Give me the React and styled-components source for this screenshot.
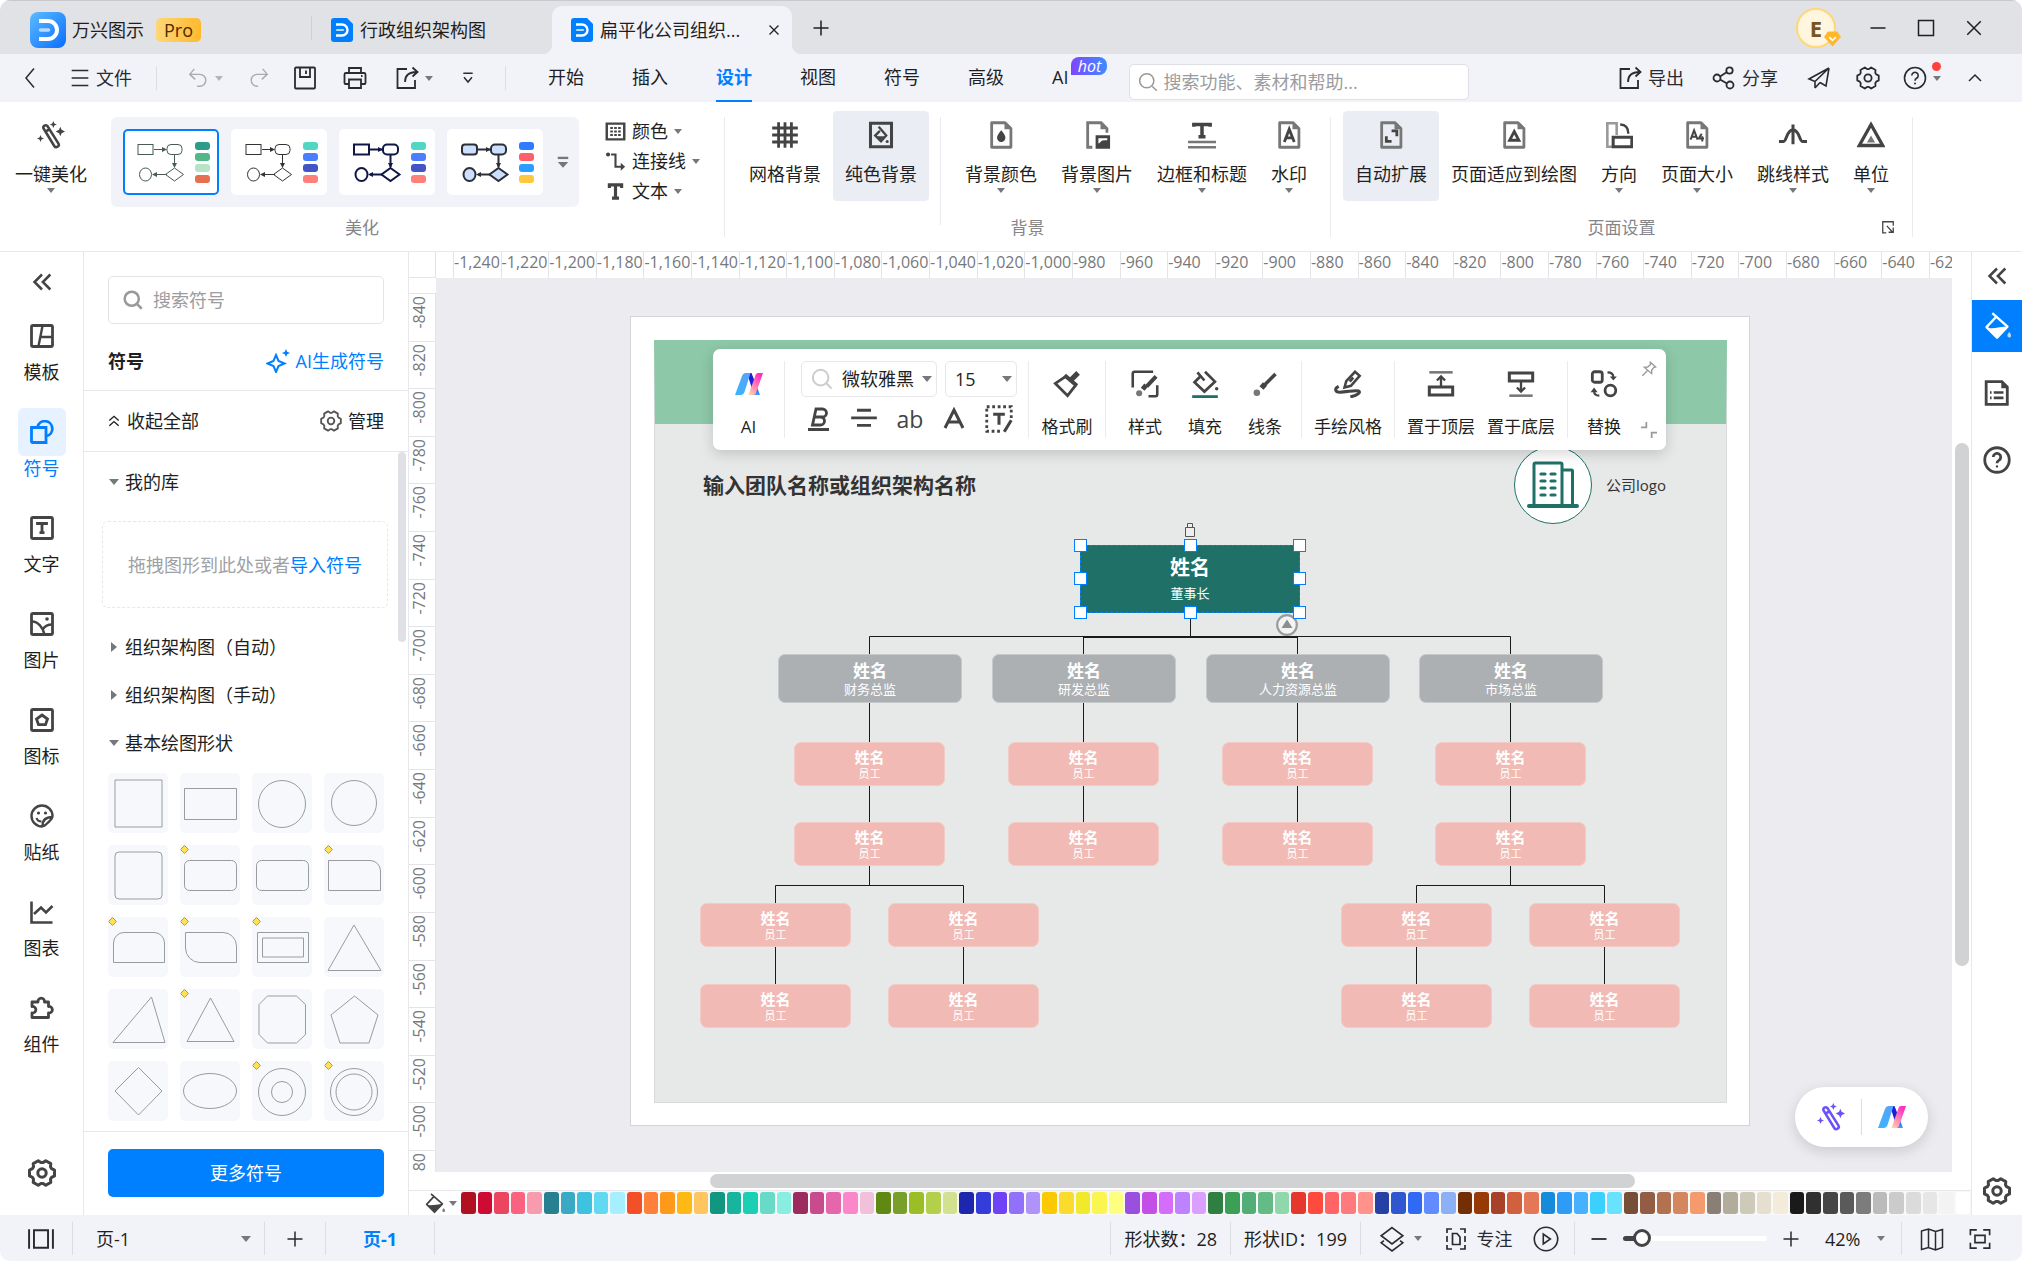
import React from "react";
import styled, { createGlobalStyle, css } from "styled-components";

const FONT = `"Open Sans", "Noto Sans CJK SC", sans-serif`;

/* ---------- icons ---------- */

const gearPath = (c, outer, inner) => {
    const pts = [];
    for (let i = 0; i < 6; i++) {
        [[-13, outer], [13, outer], [24, inner], [36, inner]].forEach(([deg, r]) => {
            const a = ((i * 60 + deg) * Math.PI) / 180;
            pts.push(`${(c + r * Math.cos(a)).toFixed(2)} ${(c + r * Math.sin(a)).toFixed(2)}`);
        });
    }
    return `M${pts.join("L")}Z`;
};

const pageOutline = (
    <path d="M4 1.5h11.5l5 5v16H4z" stroke="#777" strokeWidth="2.4" strokeLinejoin="round" />
);
const pageFold = <path d="M15 1v6h6z" fill="#777" stroke="none" />;

const ICONS = {
    back: <path d="M16 2.500L8 12l8 9.500" />,
    menu: <path d="M2 3h20M2 12h20M2 21h20" />,
    undo: <path d="M8 2L3 8l6 5.500M3.500 8H14a6.500 6.500 0 0 1 0 13h-3" />,
    redo: <path d="M16 2l5 6-6 5.500M20.500 8H10a6.500 6.500 0 0 0 0 13h1" />,
    save: <path d="M3 1.500h18a1 1 0 0 1 1 1v19a1 1 0 0 1-1 1H3a1 1 0 0 1-1-1v-19a1 1 0 0 1 1-1zM7 2v9h10V2M13 4.500v3.500" />,
    print: <path d="M6 7V2h12v5M6 18H2.500a1 1 0 0 1-1-1V8.500a1.500 1.500 0 0 1 1.500-1.500h18a1.500 1.500 0 0 1 1.500 1.500V17a1 1 0 0 1-1 1H18M6 13.500h12v8.500H6zM18 10h1.500" />,
    exportBox: <path d="M12 3H2.500v19H20v-8M10 16c0-6 3-10 12-10M17.500 1.500L22.500 6l-5 4.500" />,
    more: <path d="M5 5h14M6 11l6 7 6-7" />,
    search: <><circle cx="10.5" cy="10.5" r="8.500" /><path d="M17 17l5.500 5.500" /></>,
    share: <><circle cx="17.500" cy="4.500" r="3.200" /><circle cx="5" cy="12" r="3.500" /><circle cx="18" cy="19" r="3.500" /><path d="M8 10.500l7-4.500M8 13.500l7 4" /></>,
    send: <path d="M22 2L2 13l6 2.500V22M22 2l-3 18-6-3.500M22 2L8 15.500M8 22l5-5.500" />,
    gear: <><path d={gearPath(12, 11, 9)} strokeLinejoin="round" /><circle cx="12" cy="12" r="3.600" /></>,
    help: <><circle cx="12" cy="12" r="10.500" /><path d="M8.800 9.500a3.200 3.200 0 1 1 4.800 2.800c-1.200.7-1.600 1.200-1.600 2.400" /><circle cx="12" cy="17.500" r="1" fill="currentColor" stroke="none" /></>,
    up: <path d="M4 16l8-8 8 8" />,
    plus: <path d="M12 2v20M2 12h20" />,
    minus: <path d="M2 12h20" />,
    cross: <path d="M3 3l18 18M21 3L3 21" />,
    square: <path d="M2 2h20v20H2z" />,
    doubleLeft: <path d="M12 3l-9 9 9 9M22 3l-9 9 9 9" />,
    doubleUp: <path d="M4 11l8-7 8 7M4 20l8-7 8 7" />,
    wand: (
        <>
            <path d="M5.500 6.200a2 2 0 0 1 3.300-2l9.500 15a2 2 0 0 1-3.500 2.200zM6.500 9.500l4-2.400" strokeWidth="2.2" />
            <path d="M14 0l.9 2.100L17 3l-2.100.9L14 6l-.9-2.100L11 3l2.100-.9zM20 5l1.100 2.600L24 9l-2.900 1.400L20 13l-1.100-2.600L16 9l2.900-1.400zM3 12l.9 2.100L6 15l-2.100.9L3 18l-.9-2.100L0 15l2.100-.9z" fill="currentColor" stroke="none" />
        </>
    ),
    galleryMore: <><path d="M3 5h18" strokeWidth="4" /><path d="M3 12h18l-9 10z" fill="currentColor" stroke="none" /></>,
    colorGrid: <><path d="M2 3h20v18H2z" strokeWidth="2.800" /><path d="M6 8h3M10.500 8h3M15 8h3M6 12h3M10.500 12h3M15 12h3M6 16h3M10.500 16h3M15 16h3" strokeWidth="2.200" /></>,
    connector: <><path d="M7 4h5v14h7" strokeWidth="2.400" /><circle cx="3.500" cy="4" r="2.400" fill="currentColor" stroke="none" /><path d="M18 13.500l5 4.500-5 4.500z" fill="currentColor" stroke="none" /></>,
    text: <path d="M5 8V4.500h14V8M12 4v16M8 19.500h8" strokeWidth="3.600" />,
    hash: <path d="M6.500 1v22M12 1v22M17.500 1v22M1 6h22M1 12h22M1 18h22" strokeWidth="2.400" />,
    solidBg: <><path d="M3 2h18v20H3z" strokeWidth="2.600" /><path d="M10 5l6.500 7.500-4.500 5L7 12.500l4-4" strokeWidth="2" /><path d="M8 13h8l-4 4.500z" fill="currentColor" stroke="none" /><circle cx="17.300" cy="17.500" r="1.300" fill="currentColor" stroke="none" /></>,
    bgColor: <>{pageOutline}{pageFold}<path d="M12.200 8c2 2.600 3.600 4.300 3.600 6.300a3.600 3.600 0 0 1-7.200 0c0-2 1.600-3.700 3.600-6.300z" fill="currentColor" stroke="none" /></>,
    bgImage: <><path d="M8 22.500H4v-21h11.500l5 5V10" stroke="#777" strokeWidth="2.400" />{pageFold}<path d="M12 13.500h10v9H12z" strokeWidth="2.400" /><path d="M12 23v-3.500c3 0 3-3 6-3l4 0V23z" fill="currentColor" stroke="none" /></>,
    frameTitle: <><path d="M5 5V3h14v2M12 3v11M9 13.500h6" strokeWidth="3" /><path d="M0 18h24M0 22.500h24" stroke="#777" strokeWidth="2.200" /></>,
    watermark: <>{pageOutline}{pageFold}<path d="M8 18l4.200-11 4.300 11M9.500 14.500h5.500" strokeWidth="2.400" /></>,
    autoExpand: <>{pageOutline}{pageFold}<path d="M8 13v4.500h4.500M12.500 8.500H17V13" strokeWidth="2.400" /></>,
    fitDrawing: <>{pageOutline}{pageFold}<path d="M12.200 9l4 7.500h-8z" strokeWidth="2.400" /></>,
    orientation: <><path d="M8 22H2V2h8v10" stroke="#999" strokeWidth="2.200" /><path d="M7 14h16v8H7z" strokeWidth="2.600" /><path d="M13 3c4 0 7 2.500 7 8" strokeWidth="2" /></>,
    pageSize: <>{pageOutline}{pageFold}<path d="M6.500 16l3-8 3 8M7.500 13.500h4M16 11l-2.500 4h4.500M16.500 13v4.500" strokeWidth="1.700" /></>,
    jump: <path d="M0 17.500h4c2.500 0 2.500-10 8-10s5.500 10 8 10h4M12 3v17" strokeWidth="2.600" />,
    unit: <><path d="M12 3l10 18H2z" strokeWidth="2.800" /><path d="M12 12.500l3.500 6h-7z" fill="#777" stroke="none" /></>,
    corner: <path d="M9 22H3V3h18v7M10 10l10 11M21 13v8h-8" strokeWidth="2.200" />,
    template: <><rect x="1.500" y="1.500" width="21" height="21" rx="1.500" /><path d="M12.500 2L8.500 22M11 13h11" strokeWidth="2.400" /></>,
    symbol: <><path d="M1.500 7.500h14.500v15H2.500a1 1 0 0 1-1-1z" /><path d="M7.500 7a7.500 7.500 0 1 1 9 9" /></>,
    textBox: <><rect x="1.500" y="1.500" width="21" height="21" rx="1.500" /><path d="M7.500 9V7.500h9V9M12 7.500v9M9.500 16.700h5" strokeWidth="2.800" /></>,
    image: <><rect x="1.500" y="1.500" width="21" height="21" rx="1.500" /><path d="M2 9.500c6 0 11 6 12.500 13M13 17c2-3 5-4.500 9-4.500" strokeWidth="2.400" /><circle cx="17" cy="7" r="1.800" fill="currentColor" stroke="none" /></>,
    iconBox: <><rect x="1.500" y="1.500" width="21" height="21" rx="1.500" /><path d="M12 7l5.500 4-2 5.700h-7L6.500 11z" strokeWidth="2.800" /></>,
    sticker: <><path d="M22.500 12A10.500 10.500 0 1 0 12 22.500c2 0 3.500-1.500 5.500-3.500s5-4 5-7zM12.500 22c0-6 3-9 10-9" strokeWidth="2.400" /><path d="M6.500 14c.8 2.500 2.500 3.500 5 3.500" strokeWidth="2.200" /><circle cx="8.500" cy="9" r="1.600" fill="currentColor" stroke="none" /><circle cx="15.500" cy="9" r="1.600" fill="currentColor" stroke="none" /></>,
    chart: <path d="M1.500 1.500v21h21M4 14l7-6.500 5 5 6.500-6.500" strokeWidth="2.600" />,
    component: <path d="M8 6.500a3.300 3.300 0 1 1 6.500 0h4V11a3.300 3.300 0 1 1 0 6.500V22H2v-4.500a3.300 3.300 0 1 0 0-6.500V6.500z" strokeWidth="2.800" strokeLinejoin="round" transform="translate(0 -0.500)" />,
    sparkle: <><path d="M10 6l2.500 6 6 2.500-6 2.500-2.500 6-2.500-6-6-2.500 6-2.500z" strokeWidth="2" /><path d="M20 0l1.200 2.800L24 4l-2.800 1.200L20 8l-1.200-2.800L16 4l2.800-1.200z" fill="currentColor" stroke="none" /></>,
    bold: <path d="M9 2h6.500a4 4 0 0 1 0 8H7.500h6a4 4 0 0 1 0 8H5.500zM1 22.500h21" strokeWidth="2.800" />,
    align: <path d="M6 4.500h12M1 11h22M6 17.500h12" strokeWidth="2.400" />,
    fontA: <path d="M3 21L12 3l9 18M6.500 15h11" strokeWidth="3" />,
    textStyle: <><path d="M1.500 1.500h21v21h-21z" strokeWidth="2.400" strokeDasharray="2.400 2.300" /><path d="M14 24V13h10v11z" fill="#fff" stroke="none" /><path d="M7 8h10M12 8v9M22.500 13l-6 10" strokeWidth="2.600" /></>,
    brush: <><path d="M11 5.500L2 11.500l10.500 10.500 7-9" strokeWidth="2.400" /><path d="M10 4.500l10.500 9" strokeWidth="3.400" /><path d="M15.500 8.500l6-6" strokeWidth="4.400" /></>,
    style: <><path d="M1.500 15V3a1.500 1.500 0 0 1 1.500-1.500h16M22.500 13v8a1.500 1.500 0 0 1-1.500 1.500h-6" strokeWidth="2.200" /><path d="M21.500 5.500l-8 8.500" strokeWidth="3.400" /><path d="M13 13l-3 3.500" strokeWidth="4.200" /><circle cx="7" cy="20" r="2.600" fill="#777" stroke="none" /></>,
    fill: <><path d="M12 1.500L20.500 10l-9 8.500L3 10.500l6-6M5.500 2l6 7" strokeWidth="2.300" /><circle cx="22" cy="16" r="1.500" fill="currentColor" stroke="none" /><path d="M1 22.800h22" stroke="#1f7168" strokeWidth="2.400" /></>,
    line: <><path d="M21 3.500l-9 9" strokeWidth="3" /><path d="M12 12l-3 3.500" strokeWidth="4.600" /><circle cx="5" cy="19.500" r="2.800" fill="#777" stroke="none" /></>,
    handDrawn: <><path d="M9 15l1.500-5.500L18 1.500l4 3.500-7.500 8.500zM13.500 10l3-3.500" strokeWidth="2.200" /><path d="M4 14c-4 2-3 5 1 5 6 0 13-2 16-1 2.500 1-1 4-7 5" strokeWidth="2.600" /></>,
    toFront: <><path d="M2 14.500h20v7H2z" strokeWidth="2.600" /><path d="M2 2h20" stroke="#777" strokeWidth="2.200" /><path d="M12 14V6M8.500 9L12 5.500 15.500 9" strokeWidth="2" /></>,
    toBack: <><path d="M2 2.500h20v7H2z" strokeWidth="2.600" /><path d="M2 22h20" stroke="#777" strokeWidth="2.200" /><path d="M12 10v8M8.500 15l3.500 3.500 3.500-3.500" strokeWidth="2" /></>,
    replace: <><rect x="2" y="1.500" width="8.500" height="9" rx="2" strokeWidth="2.400" /><circle cx="17.500" cy="17.500" r="4.600" strokeWidth="2.400" /><path d="M15 2c3 0 5 1.500 5 4M8 22c-3 0-4.500-1.500-4.500-4" strokeWidth="1.800" /><path d="M17 5.500h6l-3 3.500zM.5 19h6l-3-4z" fill="currentColor" stroke="none" /></>,
    pin: <path d="M14 2l8 7-3 1-3 4 0 5L5 9.500 10 9l4-3.500zM9.500 14.500L2 22" strokeWidth="2" />,
    shrink: <path d="M0 8h8V0M24 16h-8v8" strokeWidth="2.600" />,
    bucket: <><path d="M8 1l13 11.500-9 9.500L3 13l8-8.500" strokeWidth="2" strokeLinejoin="round" /><path d="M3 13.500c6 1.500 12-1 18-1l-9 9.500z" fill="currentColor" stroke="none" /><path d="M22.500 17c1 1.500 1.600 2.300 1.600 3.200a1.600 1.600 0 0 1-3.200 0c0-.9.6-1.700 1.600-3.200z" fill="currentColor" opacity="0.700" stroke="none" /></>,
    doc: <><path d="M2 1.500h14.500l5 5v16H2z" /><path d="M16 1v6.500h6z" fill="currentColor" stroke="none" /><path d="M5.500 11.500h1.500M9 11.500h9M5.500 16.500h1.500M9 16.500h9" strokeWidth="2.400" /></>,
    pageView: <path d="M1 3v18M23 3v18M5.500 4h13v16h-13z" strokeWidth="1.800" />,
    layers: <path d="M12 1.500l10 7.500-10 7.500L2 9zM4.500 13.500L2 15.500l10 7.500 10-7.500-2.500-2" />,
    focus: <path d="M8 2H3v4M3 18v4h5M16 2h5v4M21 18v4h-5M8.500 6.500h4.500l3 3.500v7.500H8.500zM3 9v6M21 9v6" />,
    play: <><circle cx="12" cy="12" r="10.800" /><path d="M9.500 7.500v9l6.500-4.500z" /></>,
    map: <path d="M1.500 4l7-2 7 2.500 7-2v18l-7 2.500-7-2.500-7 2zM8.500 2v19M15.500 4.500v18" />,
    fullscreen: <path d="M1.500 8V2h7M15.500 2h7v6M22.500 16v6h-7M8.500 22h-7v-6M6.500 8h11v8h-11z" />
};

function Icon({ name, size = 24, width = 1.5, color }) {
    return (
        <Svg
            viewBox="0 0 24 24"
            width={size}
            height={size}
            fill="none"
            stroke="currentColor"
            strokeWidth={width}
            color={color}
            aria-hidden="true"
        >
            {ICONS[name]}
        </Svg>
    );
}

function AiMark({ id }) {
    return (
        <Svg viewBox="0 0 28 22" width={28} height={22} aria-hidden="true">
            <defs>
                <linearGradient id={`${id}a`} x1="0" y1="1" x2="1" y2="0">
                    <stop offset="0" stopColor="#36b6ff" />
                    <stop offset="1" stopColor="#5f9ff5" />
                </linearGradient>
                <linearGradient id={`${id}b`} x1="0" y1="1" x2="0.600" y2="0">
                    <stop offset="0" stopColor="#ffd9a8" />
                    <stop offset="1" stopColor="#ff2fc0" />
                </linearGradient>
                <linearGradient id={`${id}c`} x1="0" y1="0" x2="0" y2="1">
                    <stop offset="0.500" stopColor="#1b1fd8" />
                    <stop offset="1" stopColor="#37a4ff" />
                </linearGradient>
            </defs>
            <path d="M12 0h4.500l8.500 22h-6z" fill={`url(#${id}c)`} />
            <path d="M0 22L7 3q1-3 4-3h4.500L9.500 19q-1 3-4 3z" fill={`url(#${id}a)`} />
            <path d="M20.500 2q.7-2 2.500-2h5l-7 20q-.7 2-2.500 2h-5z" fill={`url(#${id}b)`} />
        </Svg>
    );
}

function BrandMark() {
    return (
        <Svg viewBox="0 0 36 36" width={36} height={36} aria-hidden="true">
            <defs>
                <linearGradient id="brand" x1="0" y1="0" x2="1" y2="1">
                    <stop offset="0" stopColor="#5cbcff" />
                    <stop offset="1" stopColor="#0a6dff" />
                </linearGradient>
            </defs>
            <rect width="36" height="36" rx="8" fill="url(#brand)" />
            <path d="M9 9h9a9 9 0 0 1 0 18H9" fill="none" stroke="#fff" strokeWidth="4" />
            <path d="M10.500 18h8" stroke="#b5dcff" strokeWidth="3.500" strokeLinecap="round" />
        </Svg>
    );
}

function FileMark() {
    return (
        <Svg viewBox="0 0 22 24" width={22} height={24} aria-hidden="true">
            <path d="M3 0h13l6 6v15a3 3 0 0 1-3 3H3a3 3 0 0 1-3-3V3a3 3 0 0 1 3-3z" fill="#0080ff" />
            <path d="M5 6.500h6a5.500 5.500 0 0 1 0 11H5" fill="none" stroke="#fff" strokeWidth="2.400" />
            <path d="M6 12h6" stroke="#b5dcff" strokeWidth="2.200" strokeLinecap="round" />
        </Svg>
    );
}

/* ---------- data ---------- */

const MENU = ["开始", "插入", "设计", "视图", "符号", "高级", "AI"];

const THEMES = [
    { line: "#4a5a55", w: 1, fill: "none", bars: ["#2a9d8a", "#52b788", "#b7e4c7", "#e76f51"], sharp: true },
    { line: "#333", w: 1, fill: "none", bars: ["#52d6c4", "#4a7dff", "#4355c4", "#ff7f79"], sharp: true },
    { line: "#101645", w: 2, fill: "#fff", bars: ["#52d6c4", "#4a7dff", "#4355c4", "#ff7f79"], sharp: true },
    { line: "#2c2f36", w: 2, fill: "#cddfff", bars: ["#2f7bff", "#ff5f66", "#2a9dff", "#ffc73d"] }
];

const BG_TOOLS = [
    { icon: "hash", label: "网格背景" },
    { icon: "solidBg", label: "纯色背景", active: true }
];
const BG_MENUS = [
    { icon: "bgColor", label: "背景颜色", menu: true },
    { icon: "bgImage", label: "背景图片", menu: true },
    { icon: "frameTitle", label: "边框和标题", menu: true },
    { icon: "watermark", label: "水印", menu: true }
];
const PAGE_TOOLS = [
    { icon: "autoExpand", label: "自动扩展", active: true },
    { icon: "fitDrawing", label: "页面适应到绘图" },
    { icon: "orientation", label: "方向", menu: true },
    { icon: "pageSize", label: "页面大小", menu: true },
    { icon: "jump", label: "跳线样式", menu: true },
    { icon: "unit", label: "单位", menu: true }
];

const NAV = [
    { icon: "template", label: "模板" },
    { icon: "symbol", label: "符号", active: true },
    { icon: "textBox", label: "文字" },
    { icon: "image", label: "图片" },
    { icon: "iconBox", label: "图标" },
    { icon: "sticker", label: "贴纸" },
    { icon: "chart", label: "图表" },
    { icon: "component", label: "组件" }
];

const SHAPES = [
    { name: "正方形", el: <path d="M7 7h47v47H7z" /> },
    { name: "矩形", el: <path d="M4.500 15.500h52v31h-52z" /> },
    { name: "圆形", el: <circle cx="30" cy="31" r="23.500" /> },
    { name: "正圆", el: <circle cx="30" cy="30" r="22.500" /> },
    { name: "圆角正方形", el: <rect x="7" y="7" width="47" height="47" rx="4" /> },
    { name: "圆角矩形", el: <rect x="4.500" y="15.500" width="52" height="30" rx="5" />, adj: true },
    { name: "圆角矩形 2", el: <rect x="4.500" y="15.500" width="52" height="30" rx="5" /> },
    { name: "单圆角矩形", el: <path d="M4.500 15.500H46a10.500 10.500 0 0 1 10.500 10.500v19.500h-52z" />, adj: true },
    { name: "顶圆角矩形", el: <path d="M5.500 45.500V26a10.500 10.500 0 0 1 10.500-10.500h30A10.500 10.500 0 0 1 56.500 26v19.500z" />, adj: true },
    { name: "对角圆角矩形", el: <path d="M5.500 15.500H43A13.500 13.500 0 0 1 56.500 29v16.500H20A14.500 14.500 0 0 1 5.500 31z" />, adj: true },
    { name: "框", el: <path d="M5.500 15.500h51v30h-51zM10.500 21h41v19h-41z" />, adj: true },
    { name: "三角形", el: <path d="M30 8l27 45.500H4z" /> },
    { name: "斜三角形", el: <path d="M43.500 8L57 53.500H5z" /> },
    { name: "等腰三角形", el: <path d="M30.500 9L54 52.500H7z" />, adj: true },
    { name: "切角正方形", el: <path d="M15.500 7h29l9 8.500v30l-9 8.500h-29L7 45.500v-30z" /> },
    { name: "五边形", el: <path d="M30.500 7L54 26l-9 28H16L7 26z" /> },
    { name: "菱形", el: <path d="M30.500 6.500L54 30 30.500 54 7 30z" /> },
    { name: "椭圆", el: <ellipse cx="30" cy="30" rx="26.500" ry="17.500" /> },
    { name: "圆环", el: <><circle cx="30" cy="31" r="23.500" /><circle cx="30" cy="31" r="10.500" /></>, adj: true },
    { name: "细圆环", el: <><circle cx="30" cy="31" r="23.500" /><circle cx="30" cy="31" r="18" /></>, adj: true }
];

const PALETTE = `b01020 ce0b33 eb4560 f9637f f99bae 27808f 3aaac4 3fc1e0 61d9f1 a5efff
f35027 ff8038 ff991a ffb914 ffc55f 119680 17b59d 1bcfb4 68dac8 88eedf
9c2b5f c84b8d e566ab fb86c9 f1c1dc 5f8913 779f29 9bbd25 b3d04a d1e18f
1c27ae 343dd9 6f42f5 9170fc b092fb fbc900 fbdc2d f0ea2b fbf64f fcff80
9b4fdf c44fe6 d46dfb bf82ff dba0ff 2f7f43 3b9f56 52ad77 64bb86 90d8ab
e6372c ff4b3e ff6466 ff7a7c ff938c 2541a5 2e57d0 3069f3 628bff 8bb0f6
732e05 973a05 a74128 d1603f e37758 168bdc 2d9cf7 46b2ff 3bd1ff 68e2ff
774f37 935d45 b27250 d4875f f59a6c 8a7f75 b2ac9c cecaba e6decf f4ecda
1a1a1a 303030 464646 5a5a5a 7c7c7c bbbbbb cbcbcb dbdbdb e6e6e6 f3f3f3 ffffff`.split(/\s+/);

const X_TICKS = Array.from({ length: 32 }, (_, i) => (-1240 + i * 20).toLocaleString("en-US"));
const Y_TICKS = Array.from({ length: 19 }, (_, i) => String(-840 + i * 20));

const MANAGERS = [
    { x: 239, title: "财务总监" },
    { x: 453, title: "研发总监" },
    { x: 667, title: "人力资源总监" },
    { x: 880, title: "市场总监" }
];
const STAFF = [
    ...MANAGERS.flatMap(m => [{ x: m.x, y: 426 }, { x: m.x, y: 506 }]),
    ...[145, 333, 786, 974].flatMap(x => [{ x, y: 587 }, { x, y: 668 }])
];
const HANDLES = [
    [450, 229], [560, 229], [669, 229], [450, 262], [669, 262], [450, 296], [560, 296], [669, 296]
];

/* ---------- pieces ---------- */

function ThemeCard({ theme, selected }) {
    const { line, w, fill, bars, sharp } = theme;
    return (
        <Card $selected={selected} aria-label="主题样式">
            <Svg viewBox="0 0 96 66" width={96} height={66} fill="none" aria-hidden="true">
                <g stroke={line} strokeWidth={w} fill={fill}>
                    <rect x="15" y="15.500" width="15" height="10" rx={sharp ? 0 : 3} />
                    <rect x="44" y="15.500" width="15" height="10" rx="4" />
                    <path d="M31 20.500h12M51.500 26v12M44 45.500H31" />
                    <ellipse cx="22.500" cy="45.500" rx="6" ry="6.500" />
                    <path d="M51.500 39l9 6.500-9 6.500-9-6.500z" />
                </g>
                <path d="M39 18l5 2.500-5 2.500zM49 34l2.500 5 2.500-5zM34 43l-5 2.500 5 2.500z" fill={line} />
                {bars.map((c, i) => (
                    <rect key={i} x="72" y={13 + i * 11} width="15" height="8" rx="3" fill={c} />
                ))}
            </Svg>
        </Card>
    );
}

function RibbonTool({ icon, label, menu, active }) {
    return (
        <RibbonButton $active={active}>
            <Icon name={icon} size={28} />
            <span>{label}</span>
            {menu && <Caret />}
        </RibbonButton>
    );
}

function FloatTool({ icon, label, width }) {
    return (
        <FloatButton $width={width}>
            <Icon name={icon} size={28} />
            <span>{label}</span>
        </FloatButton>
    );
}

function TitleBar() {
    return (
        <TitleRow>
            <Brand>
                <BrandMark />
                <BrandName>万兴图示</BrandName>
                <Pro>Pro</Pro>
            </Brand>
            <Tab>
                <FileMark />
                <span>行政组织架构图</span>
            </Tab>
            <Tab $active>
                <FileMark />
                <span>扁平化公司组织...</span>
                <TabClose aria-label="关闭标签"><Icon name="cross" size={12} width={2.5} /></TabClose>
            </Tab>
            <NewTab aria-label="新建标签"><Icon name="plus" size={18} width={2} /></NewTab>
            <WindowControls>
                <Avatar>
                    E
                    <Gem viewBox="0 0 18 16" aria-hidden="true">
                        <path d="M4 0h10l4 6-9 10L0 6z" fill="#ffb72b" />
                        <path d="M5.500 6L9 9.500 12.500 6" fill="none" stroke="#fff" strokeWidth="1.800" />
                    </Gem>
                </Avatar>
                <WinButton aria-label="最小化"><Icon name="minus" size={18} width={2} /></WinButton>
                <WinButton aria-label="最大化"><Icon name="square" size={18} width={2} /></WinButton>
                <WinButton aria-label="关闭"><Icon name="cross" size={18} width={2} /></WinButton>
            </WindowControls>
        </TitleRow>
    );
}

function MenuBar() {
    return (
        <MenuRow>
            <MenuTools>
                <IconButton $width={60} aria-label="返回"><Icon name="back" /></IconButton>
                <IconButton $width={82}><Icon name="menu" size={20} width={2} />文件</IconButton>
                <ToolStrip>
                    <IconButton $width={72} $faded aria-label="撤销"><Icon name="undo" size={22} /><Caret $faded /></IconButton>
                    <IconButton $width={36} $faded aria-label="重做"><Icon name="redo" size={22} /></IconButton>
                    <IconButton $width={56} aria-label="保存"><Icon name="save" width={1.800} /></IconButton>
                    <IconButton $width={44} aria-label="打印"><Icon name="print" width={1.800} /></IconButton>
                    <IconButton $width={74} aria-label="导出"><Icon name="exportBox" width={1.800} /><Caret /></IconButton>
                    <IconButton $width={34} aria-label="更多"><Icon name="more" size={16} width={2.200} /></IconButton>
                </ToolStrip>
            </MenuTools>
            <MenuTabs>
                {MENU.map(m => <MenuTab key={m} $active={m === "设计"}>{m}</MenuTab>)}
                <Hot>hot</Hot>
            </MenuTabs>
            <MenuSearch>
                <Icon name="search" size={20} color="#999" width={1.800} />
                <input aria-label="搜索功能" placeholder="搜索功能、素材和帮助..." />
            </MenuSearch>
            <MenuActions>
                <IconButton $width={90}><Icon name="exportBox" width={1.800} />导出</IconButton>
                <IconButton $width={98}><Icon name="share" width={1.800} />分享</IconButton>
                <IconButton $width={50} aria-label="发送"><Icon name="send" width={1.600} /></IconButton>
                <IconButton $width={48} aria-label="设置"><Icon name="gear" width={1.800} /></IconButton>
                <IconButton $width={60} aria-label="帮助"><Icon name="help" width={1.600} /><Caret /><Dot /></IconButton>
                <IconButton $width={46} aria-label="收起功能区"><Icon name="up" size={18} width={2} /></IconButton>
            </MenuActions>
        </MenuRow>
    );
}

function Ribbon() {
    return (
        <RibbonRow>
            <Section>
                <SectionBody>
                    <RibbonTool icon="wand" label="一键美化" menu />
                    <Gallery>
                        {THEMES.map((t, i) => <ThemeCard key={i} theme={t} selected={i === 0} />)}
                        <GalleryMore aria-label="更多主题"><Icon name="galleryMore" size={14} /></GalleryMore>
                    </Gallery>
                    <SmallTools>
                        <SmallTool><Icon name="colorGrid" size={21} />颜色<Caret /></SmallTool>
                        <SmallTool><Icon name="connector" size={21} />连接线<Caret /></SmallTool>
                        <SmallTool><Icon name="text" size={21} />文本<Caret /></SmallTool>
                    </SmallTools>
                </SectionBody>
                <SectionLabel>美化</SectionLabel>
            </Section>
            <RibbonRule $height={120} />
            <Section>
                <SectionBody>
                    <ToolGroup>{BG_TOOLS.map(t => <RibbonTool key={t.label} {...t} />)}</ToolGroup>
                    <RibbonRule $height={108} />
                    <ToolGroup>{BG_MENUS.map(t => <RibbonTool key={t.label} {...t} />)}</ToolGroup>
                </SectionBody>
                <SectionLabel>背景</SectionLabel>
            </Section>
            <RibbonRule $height={120} />
            <Section>
                <SectionBody>
                    <ToolGroup>{PAGE_TOOLS.map(t => <RibbonTool key={t.label} {...t} />)}</ToolGroup>
                </SectionBody>
                <SectionLabel>页面设置</SectionLabel>
                <Launcher aria-label="页面设置选项"><Icon name="corner" size={14} /></Launcher>
            </Section>
            <RibbonRule $height={120} />
        </RibbonRow>
    );
}

function SymbolPanel() {
    return (
        <Panel>
            <PanelHead>
                <PanelSearch>
                    <Icon name="search" size={20} width={3} color="#999" />
                    <input aria-label="搜索符号" placeholder="搜索符号" />
                </PanelSearch>
                <PanelTitle>
                    <h2>符号</h2>
                    <AiLink href="#ai"><Icon name="sparkle" size={24} />AI生成符号</AiLink>
                </PanelTitle>
            </PanelHead>
            <PanelBar>
                <PanelButton><Icon name="doubleUp" size={14} width={2.400} />收起全部</PanelButton>
                <PanelButton><Icon name="gear" size={22} width={2} color="#555" />管理</PanelButton>
            </PanelBar>
            <Library>
                <GroupHead aria-expanded="true"><Arrow $open />我的库</GroupHead>
                <DropZone>拖拽图形到此处或者<a href="#import">导入符号</a></DropZone>
                <GroupHead aria-expanded="false"><Arrow />组织架构图（自动）</GroupHead>
                <GroupHead aria-expanded="false"><Arrow />组织架构图（手动）</GroupHead>
                <GroupHead aria-expanded="true"><Arrow $open />基本绘图形状</GroupHead>
                <ShapeGrid>
                    {SHAPES.map(s => (
                        <ShapeCell key={s.name} aria-label={s.name}>
                            <Svg viewBox="0 0 60 60" width={60} height={60} fill="none" stroke="#9a9b9f" aria-hidden="true">
                                {s.el}
                                {s.adj && <path d="M4.500.5l4 4-4 4-4-4z" fill="#ffe155" stroke="#9a9a8a" />}
                            </Svg>
                        </ShapeCell>
                    ))}
                </ShapeGrid>
                <PanelThumb />
            </Library>
            <PanelFoot>
                <MoreButton>更多符号</MoreButton>
            </PanelFoot>
        </Panel>
    );
}

function FloatingToolbar() {
    return (
        <FloatBar>
            <FloatGroup>
                <FloatButton $width={71}><AiMark id="fa" /><span>AI</span></FloatButton>
            </FloatGroup>
            <FloatGroup>
                <TextTools>
                    <Fields>
                        <Field $width={136}>
                            <Icon name="search" size={22} width={2.200} color="#ccc" />
                            <select aria-label="字体"><option>微软雅黑</option></select>
                            <Caret $large />
                        </Field>
                        <Field $width={72}>
                            <select aria-label="字号"><option>15</option></select>
                            <Caret $large />
                        </Field>
                    </Fields>
                    <FormatRow>
                        <FormatButton aria-label="加粗"><Icon name="bold" size={24} /></FormatButton>
                        <FormatButton aria-label="对齐"><Icon name="align" size={28} /></FormatButton>
                        <FormatButton>ab</FormatButton>
                        <FormatButton aria-label="字体颜色"><Icon name="fontA" size={24} /></FormatButton>
                        <FormatButton aria-label="文本样式"><Icon name="textStyle" size={28} /></FormatButton>
                    </FormatRow>
                </TextTools>
            </FloatGroup>
            <FloatGroup><FloatTool icon="brush" label="格式刷" width={76} /></FloatGroup>
            <FloatGroup $pad="0 6px 0 9px">
                <FloatTool icon="style" label="样式" width={60} />
                <FloatTool icon="fill" label="填充" width={60} />
                <FloatTool icon="line" label="线条" width={60} />
            </FloatGroup>
            <FloatGroup><FloatTool icon="handDrawn" label="手绘风格" width={92} /></FloatGroup>
            <FloatGroup $pad="0 6px">
                <FloatTool icon="toFront" label="置于顶层" width={80} />
                <FloatTool icon="toBack" label="置于底层" width={80} />
            </FloatGroup>
            <FloatTool icon="replace" label="替换" width={72} />
            <FloatEdge>
                <EdgeButton aria-label="固定"><Icon name="pin" size={16} /></EdgeButton>
                <EdgeButton aria-label="收起"><Icon name="shrink" size={16} /></EdgeButton>
            </FloatEdge>
        </FloatBar>
    );
}

function OrgChart() {
    return (
        <Sheet>
            <Backdrop />
            <ChartTitle>输入团队名称或组织架构名称</ChartTitle>
            <LogoBadge>
                <Svg viewBox="0 0 52 48" width={52} height={48} fill="none" stroke="#1f7168" aria-hidden="true">
                    <path d="M7 45V3.500a1.500 1.500 0 0 1 1.500-1.500h25a1.500 1.500 0 0 1 1.500 1.500V45M36 9h8.500a1 1 0 0 1 1 1v35" strokeWidth="3" />
                    <path d="M2 45h48" strokeWidth="4" strokeLinecap="round" />
                    <path d="M14 13h4M24 13h4M14 20h4M24 20h4M14 27h4M24 27h4M14 34h4M24 34h4" strokeWidth="3.200" strokeLinecap="round" />
                </Svg>
            </LogoBadge>
            <LogoText>公司logo</LogoText>
            <Wires viewBox="0 0 1119 809" aria-hidden="true">
                <path d="M560.500 297v23M239.500 338v-17.500h641V338M453.500 321v17M667.500 321v17" />
                <path d="M453 321h214" strokeWidth="2" />
                {MANAGERS.map(m => <path key={m.x} d={`M${m.x + 0.5} 387v39M${m.x + 0.5} 470v36`} />)}
                {[[239, 145, 333], [880, 786, 974]].map(([x, a, b]) => (
                    <path
                        key={x}
                        d={`M${x + 0.5} 550v20M${a + 0.5} 587v-17.500H${b + 0.5}V587M${a + 0.5} 631v37M${b + 0.5} 631v37`}
                    />
                ))}
            </Wires>
            <Node $kind="root" $x={560} $y={229}><strong>姓名</strong><span>董事长</span></Node>
            {MANAGERS.map(m => (
                <Node key={m.x} $kind="manager" $x={m.x} $y={338}><strong>姓名</strong><span>{m.title}</span></Node>
            ))}
            {STAFF.map(s => (
                <Node key={`${s.x}-${s.y}`} $kind="staff" $x={s.x} $y={s.y}><strong>姓名</strong><span>员工</span></Node>
            ))}
            <Collapse aria-label="折叠分支">
                <Svg viewBox="0 0 22 22" width={22} height={22} aria-hidden="true">
                    <circle cx="11" cy="11" r="9.800" fill="#f3f4f4" stroke="#999b9c" strokeWidth="2.200" />
                    <path d="M11 5.500l5.500 8.500h-11z" fill="#8c8e8f" />
                </Svg>
            </Collapse>
            {HANDLES.map(([x, y]) => <Handle key={`${x}-${y}`} $x={x} $y={y} />)}
            <Lock viewBox="0 0 10 14" aria-hidden="true">
                <path d="M2.500 5V.5h5V5M.5 4.500h9v9h-9z" fill="#eee" stroke="#555" />
            </Lock>
        </Sheet>
    );
}

function Workspace() {
    return (
        <Work>
            <CanvasGrid>
                <Corner />
                <RulerX>
                    {X_TICKS.map((t, i) => <TickX key={t} $last={i === X_TICKS.length - 1}>{t}</TickX>)}
                </RulerX>
                <RulerY>
                    {Y_TICKS.map((t, i) => <TickY key={t} $last={i === Y_TICKS.length - 1}>{t}</TickY>)}
                </RulerY>
                <Canvas>
                    <OrgChart />
                    <FloatingToolbar />
                    <AiPill>
                        <PillButton aria-label="一键美化">
                            <Icon name="wand" size={28} color="#6a52f5" />
                        </PillButton>
                        <Rule $height={36} />
                        <PillButton aria-label="AI 助手"><AiMark id="pa" /></PillButton>
                    </AiPill>
                </Canvas>
                <ScrollY><i /></ScrollY>
            </CanvasGrid>
            <ScrollX><i /></ScrollX>
            <PaletteRow>
                <PaletteButton aria-label="填充颜色"><Icon name="bucket" size={21} /><Caret /></PaletteButton>
                <Swatches>
                    {PALETTE.map((c, i) => <Swatch key={i} $color={`#${c}`} aria-label={`颜色 #${c}`} />)}
                </Swatches>
            </PaletteRow>
        </Work>
    );
}

function StatusBar() {
    return (
        <Status>
            <StatusButton $width={62} aria-label="页面视图"><Icon name="pageView" size={26} /></StatusButton>
            <Rule $height={33} />
            <PageSelect>
                <select aria-label="页面"><option>页-1</option></select>
                <Caret $large />
            </PageSelect>
            <Rule $height={33} />
            <StatusButton $width={60} aria-label="新建页面"><Icon name="plus" size={18} width={2} /></StatusButton>
            <Rule $height={33} />
            <StatusButton $width={108} $current>页-1</StatusButton>
            <Rule $height={33} />
            <Spacer />
            <Rule $height={33} />
            <StatusText>形状数：28</StatusText>
            <Rule $height={33} />
            <StatusText>形状ID：199</StatusText>
            <Rule $height={33} />
            <StatusButton $width={78} aria-label="图层"><Icon name="layers" size={26} /><Caret /></StatusButton>
            <StatusButton $width={78}><Icon name="focus" width={1.700} />专注</StatusButton>
            <StatusButton $width={57} aria-label="演示"><Icon name="play" size={26} /></StatusButton>
            <Rule $height={33} />
            <StatusButton $width={48} aria-label="缩小"><Icon name="minus" size={18} width={2.400} /></StatusButton>
            <ZoomRange type="range" min="0" max="100" defaultValue="8" aria-label="缩放" />
            <StatusButton $width={48} aria-label="放大"><Icon name="plus" size={18} width={2} /></StatusButton>
            <ZoomSelect>
                <select aria-label="缩放比例"><option>42%</option></select>
                <Caret />
            </ZoomSelect>
            <Rule $height={33} />
            <StatusButton $width={60} aria-label="导航图"><Icon name="map" /></StatusButton>
            <StatusButton $width={36} aria-label="全屏"><Icon name="fullscreen" size={22} width={1.800} /></StatusButton>
        </Status>
    );
}

export default function App() {
    return (
        <>
            <Global />
            <Window>
                <TitleBar />
                <MenuBar />
                <Ribbon />
                <Main>
                    <Rail>
                        <RailCollapse aria-label="收起面板"><Icon name="doubleLeft" size={20} width={3} /></RailCollapse>
                        <RailList>
                            {NAV.map(n => (
                                <RailItem key={n.label} $active={n.active}>
                                    <RailIcon $active={n.active}><Icon name={n.icon} width={2.800} /></RailIcon>
                                    {n.label}
                                </RailItem>
                            ))}
                        </RailList>
                        <RailGear aria-label="设置"><Icon name="gear" size={28} width={2.600} /></RailGear>
                    </Rail>
                    <SymbolPanel />
                    <Workspace />
                    <SideRail>
                        <SideButton $height={48} aria-label="展开"><Icon name="doubleLeft" size={20} width={3} /></SideButton>
                        <SideButton $height={52} $active aria-label="填充"><Icon name="bucket" size={28} /></SideButton>
                        <SideButton $height={82} aria-label="页面属性"><Icon name="doc" size={26} width={2.600} /></SideButton>
                        <SideButton $height={52} aria-label="帮助"><Icon name="help" size={28} width={2.400} /></SideButton>
                        <Spacer />
                        <SideButton $height={48} aria-label="设置"><Icon name="gear" size={28} width={2.600} /></SideButton>
                    </SideRail>
                </Main>
                <StatusBar />
            </Window>
        </>
    );
}

/* ---------- styles ---------- */

const Global = createGlobalStyle`
    * { box-sizing: border-box; }
    body { margin: 0; background: #fff; }
    body, button, input, select {
        font-family: ${FONT};
        font-size: 18px;
        color: #1f1f22;
    }
    button, select, input {
        margin: 0;
        padding: 0;
        border: 0;
        background: none;
        line-height: 24px;
    }
    select { appearance: none; outline: none; }
    input { outline: none; min-width: 0; }
    input::placeholder { color: #9b9ca0; opacity: 1; }
    a { color: #0080ff; text-decoration: none; }
`;

const center = css`
    display: flex;
    align-items: center;
    justify-content: center;
`;

const Svg = styled.svg`
    flex: none;
    display: block;
`;

const Caret = styled.i`
    flex: none;
    border: ${p => (p.$large ? 5 : 4)}px solid transparent;
    border-top: ${p => (p.$large ? 6 : 5)}px solid ${p => (p.$faded ? "#b4b5b9" : "#77787c")};
    border-bottom: 0;
`;

const Rule = styled.i`
    flex: none;
    width: 1px;
    height: ${p => p.$height}px;
    background: #dcdde2;
`;

const Spacer = styled.div`
    flex: 1;
`;

const Window = styled.div`
    height: 100vh;
    display: flex;
    flex-direction: column;
    overflow: hidden;
    background: #fff;
    border-radius: 10px;
`;

const TitleRow = styled.header`
    flex: none;
    display: flex;
    height: 54px;
    background: #e1e2e5;
    border-top: 1px solid #c8c9cc;
`;

const Brand = styled.div`
    flex: none;
    display: flex;
    align-items: center;
    width: 312px;
    padding: 5px 0 0 30px;
    align-self: center;
    background: linear-gradient(#cfd0d4, #cfd0d4) right center / 1px 24px no-repeat;
`;

const BrandName = styled.span`
    margin: 0 12px 0 6px;
    line-height: 24px;
`;

const Pro = styled.span`
    width: 45px;
    border-radius: 5px;
    background: linear-gradient(90deg, #ffd778, #ffb92e);
    color: #4a2c00;
    line-height: 24px;
    text-align: center;
`;

const Tab = styled.div`
    position: relative;
    display: flex;
    align-items: center;
    gap: 7px;
    width: 240px;
    height: 48px;
    margin-top: 5px;
    padding: 0 0 0 19px;
    border-radius: 10px 10px 0 0;
    line-height: 24px;
    ${p => p.$active && css`
        background: #f2f3f9;
        &::before, &::after {
            content: "";
            position: absolute;
            bottom: 0;
            width: 9px;
            height: 9px;
            background: radial-gradient(circle at 0 0, transparent 9px, #f2f3f9 9px);
        }
        &::before { left: -9px; }
        &::after { right: -9px; transform: scaleX(-1); }
    `}
`;

const TabClose = styled.button`
    ${center}
    width: 24px;
    height: 24px;
    margin: 0 6px 0 auto;
`;

const NewTab = styled.button`
    ${center}
    width: 58px;
`;

const WindowControls = styled.div`
    display: flex;
    align-items: center;
    margin-left: auto;
    padding-right: 24px;
`;

const Avatar = styled.div`
    ${center}
    position: relative;
    width: 40px;
    height: 40px;
    margin-right: 18px;
    border: 2px solid #ffd777;
    border-radius: 50%;
    background: #fff6e0;
    color: #7a5420;
    font-size: 22px;
    font-weight: 700;
`;

const Gem = styled.svg`
    position: absolute;
    right: -7px;
    bottom: -1px;
    width: 17px;
    height: 16px;
`;

const WinButton = styled.button`
    ${center}
    width: 48px;
    height: 40px;
`;

const MenuRow = styled.nav`
    flex: none;
    display: flex;
    height: 48px;
    background: #f2f3f9;
`;

const MenuTools = styled.div`
    display: flex;
    align-items: center;
    width: 506px;
`;

const ToolStrip = styled.div`
    display: flex;
    align-items: center;
    width: 350px;
    height: 24px;
    margin-left: auto;
    padding-left: 12px;
    border: solid #dcdde2;
    border-width: 0 1px;
`;

const IconButton = styled.button`
    ${center}
    position: relative;
    gap: 6px;
    width: ${p => p.$width}px;
    height: 48px;
    color: ${p => (p.$faded ? "#a9aaae" : "#2a2b2f")};
`;

const MenuTabs = styled.div`
    position: relative;
    display: flex;
    gap: 48px;
    padding-left: 42px;
`;

const MenuTab = styled.button`
    height: 48px;
    border-bottom: 2px solid transparent;
    ${p => p.$active && css`
        border-color: #0080ff;
        color: #0080ff;
        font-weight: 700;
    `}
`;

const Hot = styled.span`
    position: absolute;
    top: 3px;
    right: -39px;
    width: 36px;
    border-radius: 8px 8px 8px 0;
    background: linear-gradient(90deg, #7d47ff, #3f8cff);
    color: #fff;
    font-size: 16px;
    font-style: italic;
    line-height: 18px;
    text-align: center;
`;

const MenuSearch = styled.label`
    display: flex;
    align-items: center;
    gap: 5px;
    width: 340px;
    height: 36px;
    margin: 10px 0 0 61px;
    padding: 0 8px;
    border: 1px solid #dfe0e5;
    border-radius: 5px;
    background: #fff;
    input { flex: 1; }
`;

const MenuActions = styled.div`
    display: flex;
    align-items: center;
    margin-left: auto;
    padding-right: 24px;
`;

const Dot = styled.i`
    position: absolute;
    top: 8px;
    right: 11px;
    width: 9px;
    height: 9px;
    border-radius: 50%;
    background: #ff4040;
`;

const RibbonRow = styled.section`
    flex: none;
    display: flex;
    height: 150px;
    border-bottom: 1px solid #e8e8ec;
`;

const RibbonRule = styled(Rule)`
    margin-top: 15px;
    background: #ebebef;
`;

const Section = styled.div`
    position: relative;
    display: flex;
    flex-direction: column;
`;

const SectionBody = styled.div`
    display: flex;
    height: 114px;
`;

const SectionLabel = styled.div`
    color: #85868a;
    font-size: 17px;
    line-height: 24px;
    text-align: center;
`;

const ToolGroup = styled.div`
    display: flex;
    padding: 0 11px 0 12px;
`;

const RibbonButton = styled.button`
    display: flex;
    flex-direction: column;
    align-items: center;
    height: 90px;
    margin-top: 9px;
    padding: 10px 12px 0;
    border-radius: 4px;
    background: ${p => (p.$active ? "#ebedf5" : "none")};
    white-space: nowrap;
    svg { color: #444; }
    span { margin: 13px 0 2px; }
    ${SectionBody} > & { margin-left: 3px; }
`;

const Gallery = styled.div`
    display: flex;
    align-items: center;
    gap: 12px;
    height: 90px;
    margin: 15px 0 0 12px;
    padding: 0 8px 0 12px;
    border-radius: 6px;
    background: #f2f3f9;
`;

const Card = styled.button`
    flex: none;
    width: 96px;
    height: 66px;
    overflow: hidden;
    border-radius: 5px;
    background: #fff;
    box-shadow: ${p => (p.$selected ? "inset 0 0 0 2px #0080ff" : "none")};
`;

const GalleryMore = styled.button`
    ${center}
    width: 16px;
    height: 40px;
    color: #777;
`;

const SmallTools = styled.div`
    display: flex;
    flex-direction: column;
    gap: 6px;
    width: 119px;
    margin: 17px 0 0 26px;
`;

const SmallTool = styled.button`
    display: flex;
    align-items: center;
    gap: 6px;
    svg { color: #444; }
`;

const Launcher = styled.button`
    position: absolute;
    right: 17px;
    bottom: 17px;
    color: #444;
`;

const Main = styled.main`
    flex: 1;
    display: flex;
    min-height: 0;
`;

const Rail = styled.aside`
    flex: none;
    display: flex;
    flex-direction: column;
    align-items: center;
    width: 84px;
    border-right: 1px solid #e8e8ec;
`;

const RailCollapse = styled.button`
    ${center}
    width: 48px;
    height: 60px;
    color: #444;
`;

const RailList = styled.div`
    display: flex;
    flex-direction: column;
    gap: 24px;
`;

const RailItem = styled.button`
    display: flex;
    flex-direction: column;
    align-items: center;
    color: ${p => (p.$active ? "#0080ff" : "#1f1f22")};
`;

const RailIcon = styled.span`
    ${center}
    width: 48px;
    height: 48px;
    border-radius: 6px;
    background: ${p => (p.$active ? "#e6f2ff" : "none")};
    color: ${p => (p.$active ? "#0080ff" : "#444")};
`;

const RailGear = styled.button`
    margin: auto 0 28px;
    color: #444;
`;

const Panel = styled.aside`
    flex: none;
    display: flex;
    flex-direction: column;
    width: 325px;
    border-right: 1px solid #e8e8ec;
`;

const PanelHead = styled.div`
    padding: 24px 24px 0;
    border-bottom: 1px solid #e8e8ec;
`;

const PanelSearch = styled.label`
    display: flex;
    align-items: center;
    gap: 10px;
    height: 48px;
    padding: 0 14px;
    border: 1px solid #e3e3e8;
    border-radius: 5px;
    input { flex: 1; }
`;

const PanelTitle = styled.div`
    display: flex;
    align-items: center;
    justify-content: space-between;
    height: 66px;
    padding-top: 7px;
    h2 {
        margin: 0;
        font-size: 18px;
        line-height: 24px;
    }
`;

const AiLink = styled.a`
    display: flex;
    align-items: center;
    gap: 6px;
    line-height: 24px;
`;

const PanelBar = styled.div`
    display: flex;
    align-items: center;
    justify-content: space-between;
    height: 61px;
    padding: 0 24px 0 23px;
    border-bottom: 1px solid #e8e8ec;
`;

const PanelButton = styled.button`
    display: flex;
    align-items: center;
    gap: 6px;
`;

const Library = styled.div`
    position: relative;
    flex: 1;
    min-height: 0;
    overflow: hidden;
    padding-top: 6px;
`;

const GroupHead = styled.button`
    display: flex;
    align-items: center;
    width: 100%;
    height: 48px;
    padding-left: 24px;
    text-align: left;
`;

const Arrow = styled.i`
    width: 17px;
    height: 10px;
    background: #77787c;
    clip-path: ${p => (p.$open
        ? "polygon(1px 2px, 11px 2px, 6px 8px)"
        : "polygon(3px 0, 9px 5px, 3px 10px)")};
`;

const DropZone = styled.div`
    ${center}
    height: 87px;
    margin: 15px 20px 15px 18px;
    border: 1px dashed #e6e7ea;
    border-radius: 6px;
    color: #a0a1a5;
    line-height: 24px;
`;

const ShapeGrid = styled.div`
    display: grid;
    grid-template-columns: repeat(4, 60px);
    gap: 12px;
    padding: 6px 24px 0;
`;

const ShapeCell = styled.button`
    height: 60px;
    border-radius: 5px;
    background: #f6f8fc;
`;

const PanelThumb = styled.i`
    position: absolute;
    top: 0;
    right: 2px;
    width: 8px;
    height: 190px;
    border-radius: 4px;
    background: #e0e1e6;
`;

const PanelFoot = styled.div`
    padding: 17px 24px 18px;
    border-top: 1px solid #e8e8ec;
`;

const MoreButton = styled.button`
    width: 100%;
    height: 48px;
    border-radius: 5px;
    background: #0080ff;
    color: #fff;
`;

const Work = styled.section`
    flex: 1;
    display: flex;
    flex-direction: column;
    min-width: 0;
`;

const CanvasGrid = styled.div`
    flex: 1;
    display: grid;
    grid-template-columns: 27px minmax(0, 1fr) 19px;
    grid-template-rows: 26px minmax(0, 1fr);
    min-height: 0;
`;

const Corner = styled.div`
    border-right: 1px solid #e4e4e8;
    border-bottom: 1px solid #e4e4e8;
`;

const RulerX = styled.div`
    display: flex;
    padding-left: 17px;
    overflow: hidden;
    grid-column: 2;
`;

/* the last tick runs past the end of the ruler */
const TickX = styled.span`
    flex: ${p => (p.$last ? "0 0 48px" : "1 1 0")};
    min-width: 0;
    margin-right: ${p => (p.$last ? -25 : 0)}px;
    border-left: 1px solid #e4e4e8;
    color: #77787c;
    font-size: 16px;
    line-height: 20px;
    white-space: nowrap;
`;

const RulerY = styled.div`
    display: flex;
    flex-direction: column;
    grid-row: 2;
    padding-top: 15px;
    overflow: hidden;
`;

const TickY = styled.span`
    flex: ${p => (p.$last ? "0 0 48px" : "1 1 0")};
    min-height: 0;
    width: 27px;
    margin-bottom: ${p => (p.$last ? -26 : 0)}px;
    padding: 2px 0;
    border-right: 1px solid #e4e4e8;
    border-top: 1px solid #e4e4e8;
    color: #77787c;
    font-size: 16px;
    line-height: 20px;
    text-align: right;
    writing-mode: sideways-lr;
    white-space: nowrap;
`;

const Canvas = styled.div`
    position: relative;
    grid-column: 2;
    overflow: hidden;
    background: #ebebf0;
`;

const ScrollY = styled.div`
    grid-column: 3;
    grid-row: 1 / 3;
    padding: 191px 2px 0 3px;
    i {
        display: block;
        height: 523px;
        border-radius: 7px;
        background: #d1d2d4;
    }
`;

const ScrollX = styled.div`
    height: 18px;
    padding: 2px 336px 0 301px;
    i {
        display: block;
        height: 14px;
        border-radius: 7px;
        background: #d1d2d4;
    }
`;

const PaletteRow = styled.div`
    display: flex;
    height: 25px;
    border-top: 1px solid #e8e8ec;
`;

const PaletteButton = styled.button`
    display: flex;
    align-items: center;
    gap: 4px;
    width: 52px;
    padding-left: 15px;
    color: #444;
`;

const Swatches = styled.div`
    flex: 1;
    display: flex;
    gap: 2px;
    padding: 1px 1px 1px 0;
    background: #f8f8fa;
`;

const Swatch = styled.button`
    flex: 1;
    border-radius: 3px;
    background: ${p => p.$color};
`;

const Sheet = styled.div`
    position: absolute;
    left: 194px;
    top: 38px;
    width: 1120px;
    height: 810px;
    background: #fff;
    box-shadow: inset 0 0 0 1px #d3d4d9;
`;

const Backdrop = styled.div`
    position: absolute;
    inset: 24px 23px 23px 24px;
    border: 1px solid #d8dbda;
    border-top: 84px solid #8dc8a8;
    background: #e6e9e8;
`;

const ChartTitle = styled.h1`
    position: absolute;
    left: 73px;
    top: 153px;
    margin: 0;
    color: #333;
    font-size: 21px;
    line-height: 32px;
`;

const LogoBadge = styled.div`
    ${center}
    position: absolute;
    left: 884px;
    top: 130px;
    width: 78px;
    height: 78px;
    border: 1px solid #1f7168;
    border-radius: 50%;
    background: #fff;
`;

const LogoText = styled.span`
    position: absolute;
    left: 976px;
    top: 157px;
    color: #333;
    font-size: 15px;
    line-height: 24px;
`;

const Wires = styled.svg`
    position: absolute;
    left: 0;
    top: 0;
    width: 1119px;
    height: 809px;
    fill: none;
    stroke: #1a1a1a;
`;

const NODE_KINDS = {
    root: css`
        width: 220px;
        height: 68px;
        gap: 2px;
        border: 1px dashed #0080ff;
        background: #1f7168;
        strong { font-size: 20px; line-height: 26px; }
        span { font-size: 13px; line-height: 20px; }
    `,
    manager: css`
        width: 184px;
        height: 49px;
        border: 1px solid #c6c9ca;
        border-radius: 7px;
        background: #adb0b3;
        strong { font-size: 17px; line-height: 20px; }
        span { font-size: 13px; line-height: 16px; }
    `,
    staff: css`
        width: 151px;
        height: 44px;
        border: 1px solid #f2cbc6;
        border-radius: 7px;
        background: #f2bab4;
        strong { font-size: 15px; line-height: 18px; }
        span { font-size: 11px; line-height: 15px; }
    `
};

const HALF = { root: 110, manager: 91, staff: 75 };

const Node = styled.div`
    position: absolute;
    left: ${p => p.$x - HALF[p.$kind]}px;
    top: ${p => p.$y}px;
    display: flex;
    flex-direction: column;
    align-items: center;
    justify-content: center;
    color: #fff;
    ${p => NODE_KINDS[p.$kind]}
`;

const Handle = styled.i`
    position: absolute;
    left: ${p => p.$x - 6}px;
    top: ${p => p.$y - 6}px;
    width: 13px;
    height: 13px;
    border: 1px solid #0080ff;
    background: #fff;
`;

const Collapse = styled.button`
    position: absolute;
    left: 646px;
    top: 298px;
`;

const Lock = styled.svg`
    position: absolute;
    left: 555px;
    top: 207px;
    width: 10px;
    height: 14px;
`;

const FloatBar = styled.div`
    position: absolute;
    left: 277px;
    top: 71px;
    display: flex;
    height: 101px;
    padding: 12px 0;
    border-radius: 7px;
    background: #fff;
    box-shadow: 0 4px 14px rgba(0, 0, 0, 0.16);
    font-size: 17px;
`;

const FloatGroup = styled.div`
    display: flex;
    padding: ${p => p.$pad || 0};
    border-right: 1px solid #ebebef;
`;

const FloatButton = styled.button`
    display: flex;
    flex-direction: column;
    align-items: center;
    width: ${p => p.$width}px;
    padding: 9px 0 0;
    font-size: 17px;
    white-space: nowrap;
    svg { color: #444; height: 28px; }
    span { margin-top: 17px; }
`;

const TextTools = styled.div`
    display: flex;
    flex-direction: column;
    justify-content: space-between;
    padding: 0 11px 0 16px;
`;

const Fields = styled.div`
    display: flex;
    gap: 8px;
`;

const Field = styled.div`
    display: flex;
    align-items: center;
    width: ${p => p.$width}px;
    height: 36px;
    padding: 0 4px 0 9px;
    border: 1px solid #e8e8ec;
    border-radius: 5px;
    select {
        flex: 1;
        min-width: 0;
    }
    svg { margin-right: 9px; }
`;

const FormatRow = styled.div`
    display: flex;
    align-items: center;
    justify-content: space-between;
    height: 36px;
    padding: 0 4px 2px 6px;
`;

const FormatButton = styled.button`
    color: #444;
    font-size: 23px;
    line-height: 24px;
`;

const FloatEdge = styled.div`
    display: flex;
    flex-direction: column;
    align-items: center;
    justify-content: space-between;
    width: 26px;
    padding-right: 9px;
`;

const EdgeButton = styled.button`
    color: #999;
`;

const AiPill = styled.div`
    position: absolute;
    right: 24px;
    bottom: 25px;
    display: flex;
    align-items: center;
    width: 133px;
    height: 60px;
    padding: 0 6px;
    border-radius: 30px;
    background: #fff;
    box-shadow: 0 4px 14px rgba(0, 0, 0, 0.14);
`;

const PillButton = styled.button`
    ${center}
    flex: 1;
    height: 48px;
`;

const SideRail = styled.aside`
    flex: none;
    display: flex;
    flex-direction: column;
    width: 51px;
    border-left: 1px solid #e8e8ec;
`;

const SideButton = styled.button`
    ${center}
    height: ${p => p.$height}px;
    background: ${p => (p.$active ? "#0080ff" : "none")};
    color: ${p => (p.$active ? "#fff" : "#444")};
`;

const Status = styled.footer`
    flex: none;
    display: flex;
    align-items: center;
    height: 46px;
    padding: 1px 24px 0 10px;
    background: #f2f3f9;
`;

const StatusButton = styled.button`
    ${center}
    gap: 9px;
    width: ${p => p.$width}px;
    height: 44px;
    color: ${p => (p.$current ? "#0080ff" : "#2a2b2f")};
    font-weight: ${p => (p.$current ? 700 : 400)};
`;

const PageSelect = styled.div`
    display: flex;
    align-items: center;
    width: 191px;
    padding: 0 13px 0 23px;
    select { flex: 1; }
`;

const StatusText = styled.span`
    padding: 0 13px;
    line-height: 24px;
    white-space: nowrap;
`;

const ZoomRange = styled.input`
    appearance: none;
    width: 144px;
    height: 18px;
    &::-webkit-slider-runnable-track {
        height: 5px;
        border-radius: 3px;
        background: linear-gradient(90deg, #444 18px, #fff 18px);
    }
    &::-webkit-slider-thumb {
        appearance: none;
        width: 18px;
        height: 18px;
        margin-top: -7px;
        border: 3px solid #444;
        border-radius: 50%;
        background: #fff;
    }
`;

const ZoomSelect = styled.div`
    display: flex;
    align-items: center;
    width: 86px;
    padding: 0 16px 0 10px;
    select { flex: 1; }
`;
